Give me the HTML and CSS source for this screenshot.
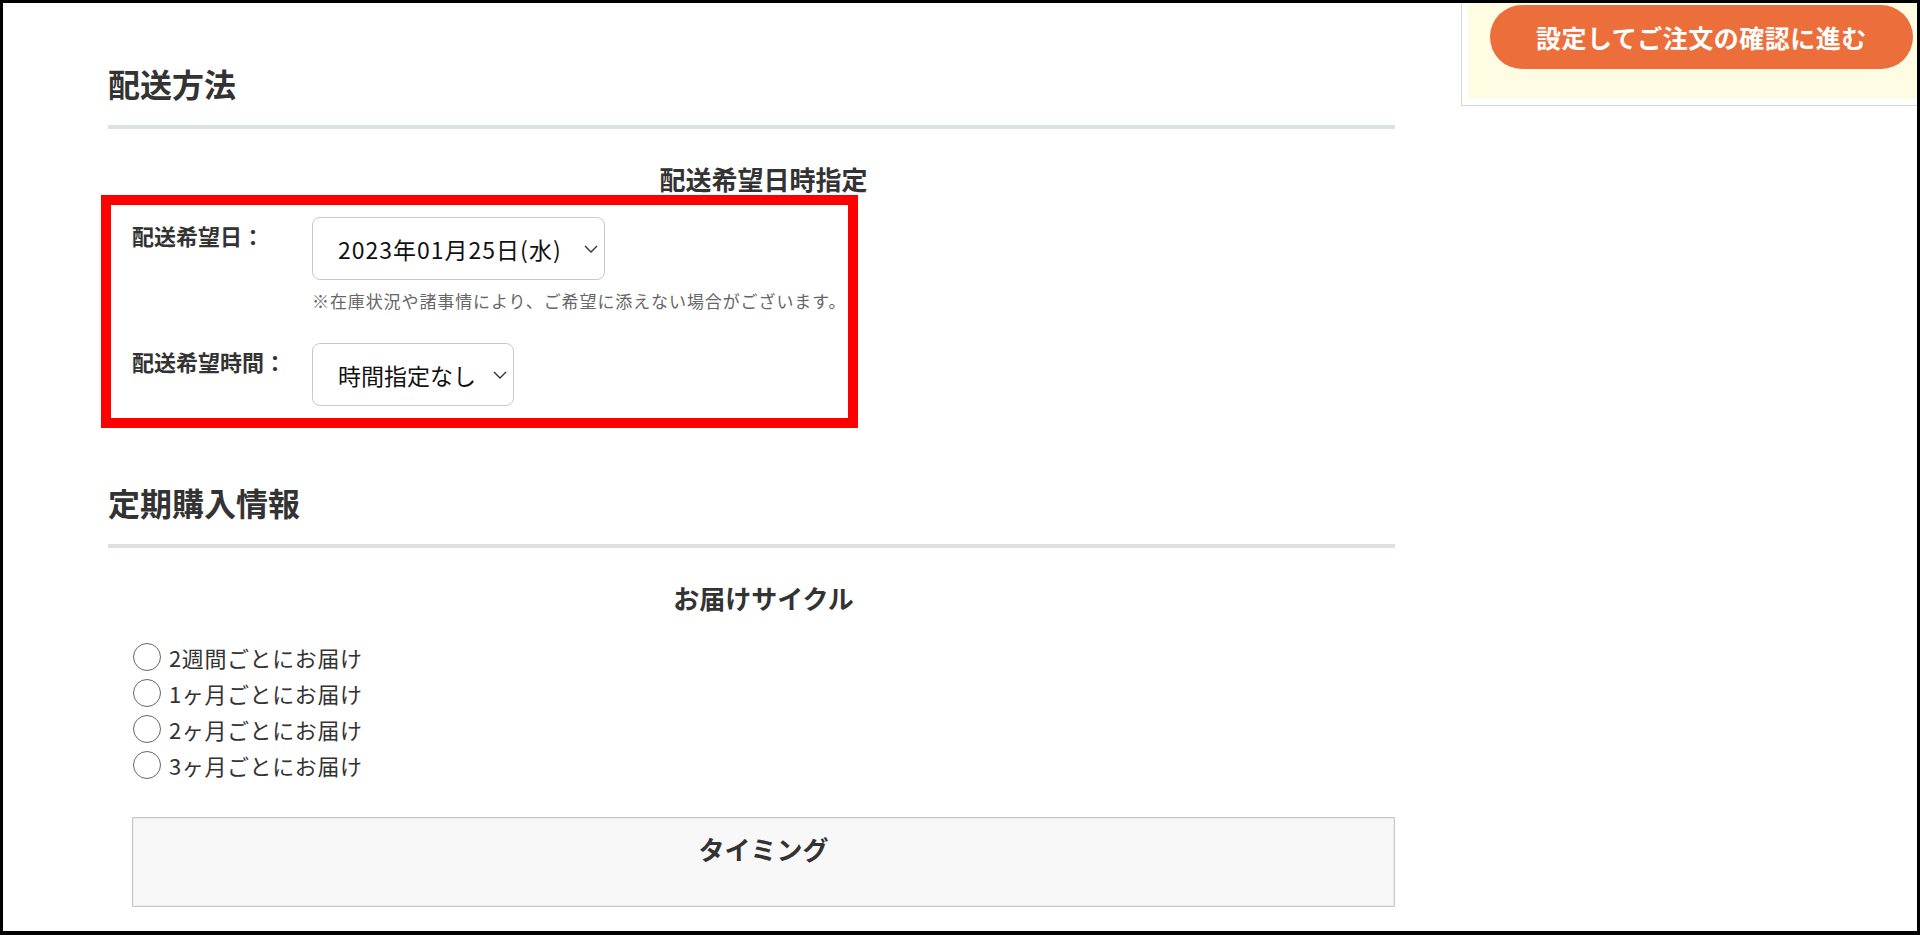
FILE: index.html
```html
<!DOCTYPE html>
<html lang="ja">
<head>
    <meta charset="UTF-8">
    <title>配送方法の指定</title>
    <link rel="stylesheet" href="styles.css">
</head>
<body>
<div id="frame">
    <div id="main">
        <h2 class="sec-title">配送方法</h2>
        <h3 class="sub-title">配送希望日時指定</h3>
        <div class="mark">
            <div class="row">
                <label class="lbl" for="day">配送希望日：</label>
                <div class="sel-wrap sel-day">
                    <select id="day">
                        <option>2023年01月25日(水)</option>
                    </select>
                    <svg class="chev" width="14" height="8" viewBox="0 0 14 8"><polyline points="1,1 7,7 13,1" fill="none" stroke="#333" stroke-width="1.4"/></svg>
                </div>
            </div>
            <p class="note">※在庫状況や諸事情により、ご希望に添えない場合がございます。</p>
            <div class="row">
                <label class="lbl" for="time">配送希望時間：</label>
                <div class="sel-wrap sel-time">
                    <select id="time">
                        <option>時間指定なし</option>
                    </select>
                    <svg class="chev" width="14" height="8" viewBox="0 0 14 8"><polyline points="1,1 7,7 13,1" fill="none" stroke="#333" stroke-width="1.4"/></svg>
                </div>
            </div>
        </div>

        <h2 class="sec-title second">定期購入情報</h2>
        <h3 class="sub-title">お届けサイクル</h3>
        <ul class="cycle">
            <li><label><input type="radio" name="cycle">2週間ごとにお届け</label></li>
            <li><label><input type="radio" name="cycle">1ヶ月ごとにお届け</label></li>
            <li><label><input type="radio" name="cycle">2ヶ月ごとにお届け</label></li>
            <li><label><input type="radio" name="cycle">3ヶ月ごとにお届け</label></li>
        </ul>
        <div class="timing">
            <h3 class="timing-title">タイミング</h3>
        </div>
    </div>
    <div id="side">
        <div class="side-box">
            <div class="side-inner">
                <button type="button" class="go-btn">設定してご注文の確認に進む</button>
            </div>
        </div>
    </div>
</div>
</body>
</html>
```

FILE: styles.css
```css
*{ margin: 0; padding: 0; box-sizing: border-box;}
li{ list-style: none;}
html, body{ height: 100%;}
body{
    background: #fff;
    color: #333;
    font-family: "Noto Sans CJK JP", "Noto Sans", sans-serif;
}
#frame{
    display: flex;
    height: 935px;
    border: 3px solid #000;
    border-bottom-width: 4px;
    overflow: hidden;
}
#main{
    flex: 0 0 1287px;
    margin-left: 105px;
}
.sec-title{
    margin-top: 64px;
    padding-bottom: 26px;
    border-bottom: 4px solid #dcdfe4;
    font-size: 32px;
    line-height: 1;
    font-weight: 700;
}
.sec-title.second{
    margin-top: 58px;
}
.sub-title{
    margin: 37px 0 0 24px;
    text-align: center;
    font-size: 26px;
    line-height: 1;
    font-weight: 700;
}
/* red marker box round the date/time rows */
.mark{
    width: 757px;
    margin: 3px 0 0 -7px;
    padding: 12px 15px 12px 21px;
    border: 10px solid #ff0000;
}
.row{
    display: flex;
    align-items: flex-start;
}
.lbl{
    flex: 0 0 180px;
    padding-top: 7px;
    font-size: 22px;
    line-height: 1;
    font-weight: 700;
}
.sel-wrap{
    position: relative;
}
.sel-wrap select{
    -webkit-appearance: none;
    appearance: none;
    display: block;
    height: 63px;
    padding: 0 0 0 25px;
    border: 1px solid #c9c9c9;
    border-radius: 8px;
    background: #fff;
    color: #111;
    font-family: "Noto Sans CJK JP", sans-serif;
    font-size: 23px;
    letter-spacing: 1px;
}
.sel-day select{ width: 293px;}
.sel-time select{ width: 202px; letter-spacing: 0;}
.chev{
    position: absolute;
    top: 28px;
    right: 7px;
}
.note{
    margin: 12px 0 34px 180px;
    font-size: 17px;
    line-height: 1;
    letter-spacing: 0.9px;
    white-space: nowrap;
    color: #666;
}
.cycle{
    margin: 28px 0 0 24px;
}
.cycle li{
    height: 36px;
}
.cycle label{
    display: flex;
    align-items: center;
    height: 100%;
    font-size: 22px;
    letter-spacing: 0.6px;
    color: #333;
}
.cycle input{
    -webkit-appearance: none;
    appearance: none;
    width: 28px;
    height: 28px;
    margin: 0 8px 0 1px;
    border: 1.5px solid #666;
    border-radius: 50%;
    background: #fff;
}
.timing{
    height: 90px;
    margin: 34px 0 0 24px;
    padding-top: 18px;
    border: 1px solid #c8c8c8;
    box-shadow: inset 0 0 0 1px #ececec;
    background: #f8f8f8;
}
.timing-title{
    text-align: center;
    font-size: 26px;
    line-height: 1;
    font-weight: 700;
}
#side{
    flex: 0 0 480px;
    margin-left: 66px;
}
.side-box{
    padding: 0 6px 6px;
    border: 1px solid #d6d6d6;
    border-top: 0;
    background: #fff;
}
.side-inner{
    padding: 2px 0 30px 22px;
    background: #fffce4;
}
.go-btn{
    display: block;
    width: 423px;
    height: 64px;
    border: 0;
    border-radius: 32px;
    background: #ec6e3a;
    color: #fff;
    font-family: "Noto Sans CJK JP", sans-serif;
    font-size: 25px;
    font-weight: 700;
    letter-spacing: 0.5px;
}
```
